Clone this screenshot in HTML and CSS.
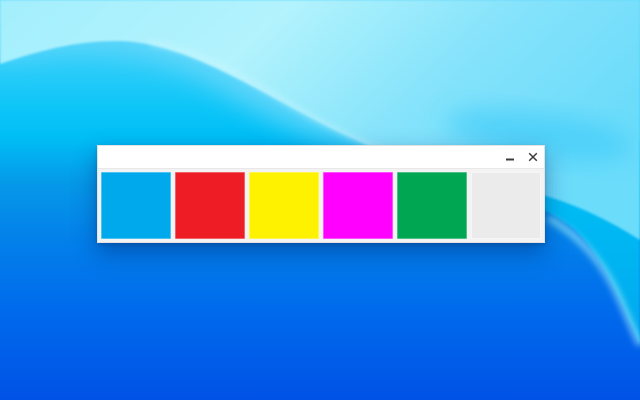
FILE: index.html
```html
<!DOCTYPE html>
<html>
<head>
<meta charset="utf-8">
<link rel="stylesheet" href="styles.css">
</head>
<body>
<div class="desktop">
  <svg class="wallpaper" viewBox="0 0 640 400" preserveAspectRatio="none" aria-hidden="true">
    <defs>
      <linearGradient id="base" x1="0" y1="0" x2="0" y2="1">
        <stop offset="0" stop-color="#5fd8fa"/>
        <stop offset="0.26" stop-color="#10c6f8"/>
        <stop offset="0.34" stop-color="#00bff6"/>
        <stop offset="0.46" stop-color="#0598e8"/>
        <stop offset="0.6" stop-color="#0380ea"/>
        <stop offset="0.78" stop-color="#006aec"/>
        <stop offset="1" stop-color="#0052e6"/>
      </linearGradient>
      <linearGradient id="sky" x1="0" y1="0" x2="1" y2="0.4">
        <stop offset="0" stop-color="#a4effd"/>
        <stop offset="0.4" stop-color="#b2f3fd"/>
        <stop offset="0.7" stop-color="#86e3fb"/>
        <stop offset="1" stop-color="#6cdcfb"/>
      </linearGradient>
      <linearGradient id="mid" x1="0" y1="0" x2="0" y2="1">
        <stop offset="0" stop-color="#00c4f7"/>
        <stop offset="1" stop-color="#06a8ee"/>
      </linearGradient>
      <filter id="b1" x="-10%" y="-10%" width="120%" height="120%"><feGaussianBlur stdDeviation="1.2"/></filter>
      <filter id="b2" x="-20%" y="-20%" width="140%" height="140%"><feGaussianBlur stdDeviation="3"/></filter>
      <filter id="b3" x="-30%" y="-30%" width="160%" height="160%"><feGaussianBlur stdDeviation="12"/></filter>
    </defs>
    <rect width="640" height="400" fill="url(#base)"/>
    <path d="M0,60 C60,45 140,40 220,90 C300,140 420,190 640,160 V0 H0 Z" fill="#62d6fa" filter="url(#b3)" opacity="0.9"/>
    <path d="M400,170 C480,185 540,200 575,230 C605,260 620,300 640,345 V140 H400 Z" fill="url(#mid)" filter="url(#b1)"/>
    <path d="M0,64 C40,50 80,40 120,41 C180,43 240,80 300,112 C360,145 420,170 500,185 C560,196 600,215 640,240 V0 H0 Z" fill="url(#sky)" filter="url(#b1)"/>
    <path d="M150,43 C220,55 260,90 320,122 C380,152 430,172 520,188" fill="none" stroke="#d8faff" stroke-width="3" opacity="0.7" filter="url(#b2)"/>
    <ellipse cx="540" cy="135" rx="95" ry="22" fill="#3ccbf8" opacity="0.65" filter="url(#b3)" transform="rotate(8 540 135)"/>
    <path d="M548,218 C580,235 605,265 620,300 C628,318 634,332 640,345" fill="none" stroke="#9eeafc" stroke-width="6" opacity="0.7" filter="url(#b2)"/>
  </svg>
  <div class="window">
    <div class="titlebar">
      <button class="ctl" aria-label="Minimize">
        <svg width="10" height="10" viewBox="0 0 10 10"><rect x="1" y="6.5" width="8" height="2" fill="#3c3c3c"/></svg>
      </button>
      <button class="ctl" aria-label="Close">
        <svg width="10" height="10" viewBox="0 0 10 10"><path d="M1.2 1.2 L8.8 8.8 M8.8 1.2 L1.2 8.8" stroke="#3c3c3c" stroke-width="1.5" fill="none"/></svg>
      </button>
    </div>
    <div class="swatches">
      <div class="swatch sw-blue"></div>
      <div class="swatch sw-red"></div>
      <div class="swatch sw-yellow"></div>
      <div class="swatch sw-magenta"></div>
      <div class="swatch sw-green"></div>
      <div class="swatch sw-gray"></div>
    </div>
  </div>
</div>
</body>
</html>
```

FILE: styles.css
```css
html, body {
  margin: 0;
  padding: 0;
  width: 640px;
  height: 400px;
  overflow: hidden;
  font-family: "Liberation Sans", Arial, sans-serif;
}

.desktop {
  position: relative;
  width: 640px;
  height: 400px;
  box-sizing: border-box;
  padding: 145px 0 0 97px;
}

.wallpaper {
  position: absolute;
  inset: 0;
  width: 640px;
  height: 400px;
  z-index: 0;
}

.window {
  position: relative;
  z-index: 1;
  width: 448px;
  box-sizing: border-box;
  background: #ffffff;
  border: 1px solid #e2e2e2;
  box-shadow: 0 10px 22px rgba(0, 40, 120, 0.45), 0 2px 4px rgba(0, 0, 0, 0.15);
  display: flex;
  flex-direction: column;
}

.titlebar {
  height: 22px;
  display: flex;
  justify-content: flex-end;
  align-items: stretch;
  padding-right: 0;
  background: #ffffff;
}

.ctl {
  width: 24px;
  border: 0;
  padding: 0;
  margin: 0;
  background: transparent;
  display: flex;
  align-items: center;
  justify-content: center;
}

.ctl + .ctl {
  margin-left: 0;
}

.ctl:first-child {
  margin-right: 0;
  padding-left: 3px;
}

.ctl:last-child {
  padding-left: 1px;
}

.ctl svg {
  display: block;
}

.swatches {
  display: flex;
  gap: 4px;
  padding: 3px;
  background: #f3f3f3;
  border-top: 1px solid #e8e8e8;
}

.swatch {
  flex: 1;
  height: 67px;
  box-sizing: border-box;
  border: 1px solid rgba(255, 255, 255, 0.3);
  border-radius: 1px;
}

.sw-blue { background: #00a9ec; }
.sw-red { background: #ee1c25; }
.sw-yellow { background: #fff200; }
.sw-magenta { background: #ff00ff; }
.sw-green { background: #00a651; }
.sw-gray { background: #ebebeb; border-color: #f6f6f6; }
```
